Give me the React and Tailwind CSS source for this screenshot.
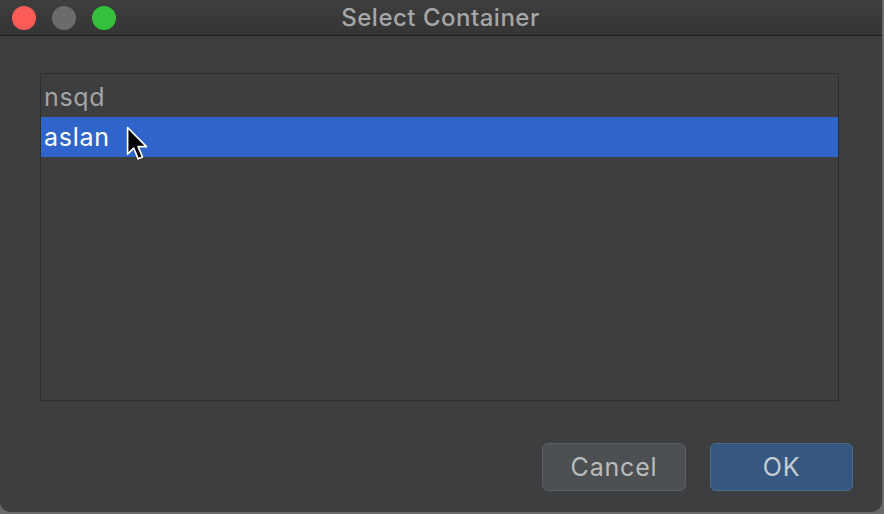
import React from 'react'

function Cursor() {
  return (
    <svg className="absolute left-[85px] top-[9px]" width="26" height="38" viewBox="0 0 17 25">
      <path
        d="M1 1 L1 18.5 L5 14.6 L8 21.6 L10.8 20.4 L7.9 13.6 L13.4 13.6 Z"
        fill="#000"
        stroke="#fff"
        strokeWidth="1.1"
        strokeLinejoin="round"
      />
    </svg>
  )
}

export default function App() {
  return (
    <div className="w-[884px] h-[514px] bg-[#6a6a6a] overflow-hidden" style={{ fontFamily: 'Inter, "Open Sans", sans-serif' }}>
      <div className="w-[882px] h-[512px] bg-[#3c3e40] rounded-b-[10px] flex flex-col overflow-hidden">
        <div className="h-[36px] shrink-0 bg-gradient-to-b from-[#3e3e3e] to-[#353535] border-b border-[#1e1e1e] flex items-center relative">
          <div className="flex items-center gap-[16px] pl-[12px]">
            <span className="w-[24px] h-[24px] rounded-full bg-[#fc5b57]" />
            <span className="w-[24px] h-[24px] rounded-full bg-[#6b6b6b]" />
            <span className="w-[24px] h-[24px] rounded-full bg-[#35c03c]" />
          </div>
          <div className="absolute inset-0 flex items-center justify-center text-[24px] font-medium text-[#a6a6a6] tracking-[0.5px] pt-[1px] pr-[1px]">
            Select Container
          </div>
        </div>

        <div className="flex-1 flex flex-col pl-[40px] pr-[43px] pt-[37px]">
          <div className="h-[328px] border border-[#2c2e30] pt-[3px]">
            <div className="h-[40px] flex items-center pl-[3px] pt-[2px] text-[25px] text-[#a4a4a4] tracking-[0.7px]">nsqd</div>
            <div className="h-[40px] flex items-center pl-[3px] pt-[2px] text-[25px] text-white bg-[#2f65ca] tracking-[0.7px] relative">
              aslan
              <Cursor />
            </div>
          </div>

          <div className="flex justify-end gap-[24px] mt-[42px] mr-[-14px]">
            <button className="w-[144px] h-[48px] pt-[2px] rounded-[6px] bg-[#4c5052] border border-[#5c5f61] text-[25px] text-[#bbbbbb] tracking-[0.8px]">
              Cancel
            </button>
            <button className="w-[143px] h-[48px] pt-[2px] rounded-[6px] bg-[#365880] border border-[#4b6d8d] text-[25px] text-[#c6ccd3] tracking-[0.8px]">
              OK
            </button>
          </div>
        </div>
      </div>
    </div>
  )
}
